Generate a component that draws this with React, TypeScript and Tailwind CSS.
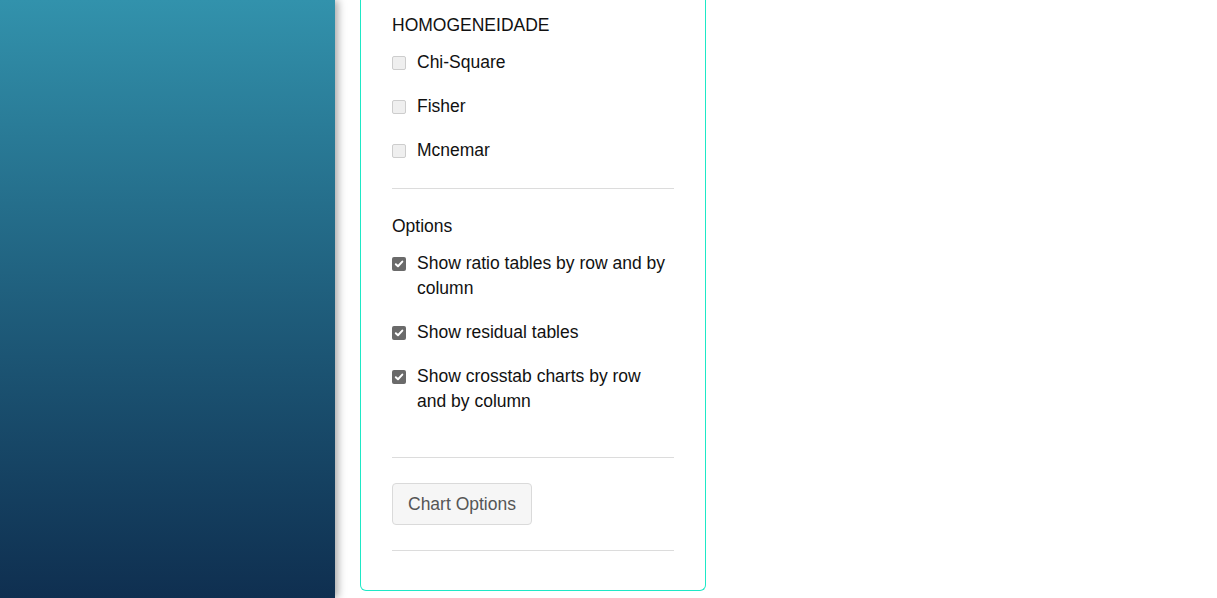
import React from "react";

function Box({ checked }: { checked: boolean }) {
  if (checked) {
    return (
      <span className="mt-[5.5px] flex h-[14px] w-[14px] shrink-0 items-center justify-center rounded-[2px] bg-[#6a6a6a]">
        <svg width="10" height="10" viewBox="0 0 10 10">
          <path d="M1.8 5.2 L4 7.3 L8.3 2.6" fill="none" stroke="#fff" strokeWidth="2" strokeLinecap="round" strokeLinejoin="round" />
        </svg>
      </span>
    );
  }
  return <span className="mt-[5.5px] block h-[14px] w-[14px] shrink-0 rounded-[2px] border border-[#cdcdcd] bg-[#efefef]" />;
}

function Item({ label, checked }: { label: string; checked: boolean }) {
  return (
    <label className="flex items-start gap-[11px] pr-[4px]">
      <Box checked={checked} />
      <span className="leading-[25px]">{label}</span>
    </label>
  );
}

export default function App() {
  return (
    <div className="flex h-[598px] w-[1217px] overflow-hidden bg-white text-[17.5px] text-[#111]" style={{ fontFamily: '"Liberation Sans", Arial, sans-serif' }}>
      <div className="relative z-10 h-full w-[335px] shrink-0 bg-gradient-to-b from-[#3292ac] to-[#0f2f50] shadow-[3px_0_8px_rgba(0,0,0,0.35)]" />
      <div className="ml-[25px] w-[346px] self-start rounded-b-[6px] border border-t-0 border-[#1ee8c6] px-[31px] pb-[39px] pt-[13px]">
        <div className="leading-[25px]">HOMOGENEIDADE</div>
        <div className="mt-[12px] flex flex-col gap-[19px]">
          <Item label="Chi-Square" checked={false} />
          <Item label="Fisher" checked={false} />
          <Item label="Mcnemar" checked={false} />
        </div>
        <div className="mt-[25px] h-px bg-[#dcdcdc]" />
        <div className="mt-[25px] leading-[25px]">Options</div>
        <div className="mt-[12px] flex flex-col gap-[19px]">
          <Item label="Show ratio tables by row and by column" checked />
          <Item label="Show residual tables" checked />
          <Item label="Show crosstab charts by row and by column" checked />
        </div>
        <div className="mt-[43px] h-px bg-[#dcdcdc]" />
        <button className="mt-[25px] h-[42px] rounded-[4px] border border-[#dadada] bg-[#f6f6f6] px-[15px] text-[17.5px] text-[#555]">
          Chart Options
        </button>
        <div className="mt-[25px] h-px bg-[#dcdcdc]" />
      </div>
    </div>
  );
}
